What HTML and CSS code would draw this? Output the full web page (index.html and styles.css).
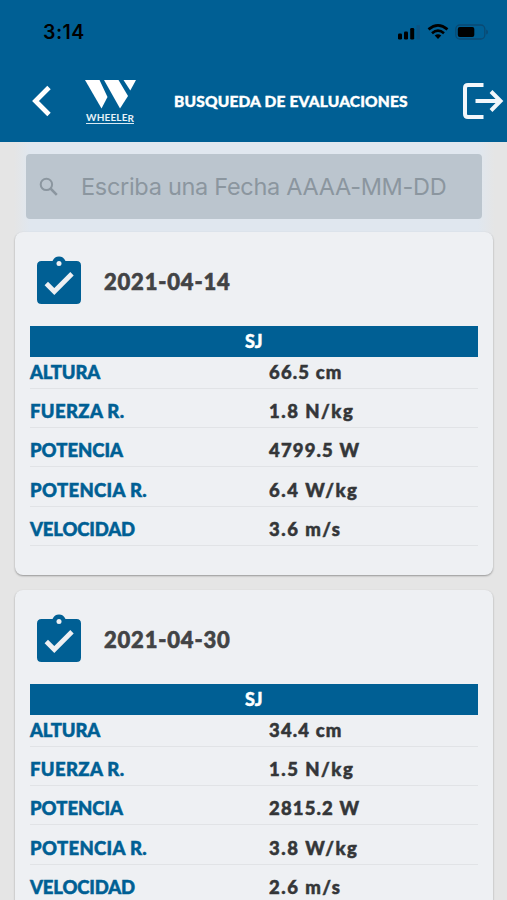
FILE: index.html
```html
<!DOCTYPE html>
<html lang="es">
<head>
<meta charset="utf-8">
<title>Busqueda de evaluaciones</title>
<link rel="stylesheet" href="styles.css">
</head>
<body>
<svg class="symbols" width="0" height="0" aria-hidden="true">
  <symbol id="clipboard" viewBox="0 0 44 48">
    <path fill="#005f94" d="M4.500 5H15.500C17 1.800 19 .4 22 .4S27 1.800 28.500 5H39.500Q44 5 44 9.500V43.500Q44 48 39.500 48H4.500Q0 48 0 43.500V9.500Q0 5 4.500 5Z"/>
    <circle cx="22" cy="7.500" r="2.500" fill="#eef0f3"/>
    <path d="M9.300 27.500L17.300 35.500L35 17.800" fill="none" stroke="#eef0f3" stroke-width="4.800"/>
  </symbol>
</svg>
<header class="header">
  <div class="status">
    <span class="clock">3:14</span>
    <svg class="indicators" width="92" height="18" viewBox="0 0 92 18">
      <rect x="2" y="10.500" width="4" height="6" rx="1.300"/><rect x="8" y="8.500" width="4" height="8" rx="1.300"/><rect x="14.200" y="5" width="4" height="11.500" rx="1.300"/><rect x="20.500" y="2" width="3.500" height="14.500" rx="1" fill="#0b5585"/>
      <g fill="none" stroke="#000" stroke-width="2.700"><path d="M32.500 6.400Q42 -1.500 51.500 6.400"/><path d="M36 10.200Q42 5.200 48 10.200"/></g>
      <path d="M38.700 12.600Q42 9.800 45.300 12.600L42 16Z"/>
      <rect x="59.800" y="2" width="29" height="14" rx="4" fill="none" stroke="#0a4a73" stroke-width="1.300"/>
      <rect x="61.800" y="4" width="16.500" height="10" rx="2"/><path d="M90.200 6.500Q92 7 92 9T90.200 11.500Z" fill="#0a4a73"/>
    </svg>
  </div>
  <div class="toolbar">
    <svg class="back" width="20" height="32" viewBox="0 0 20 32"><path d="M18 2.500L4.500 16L18 29.500" fill="none" stroke="#fff" stroke-width="4.800"/></svg>
    <div class="brand">
      <svg width="52" height="29" viewBox="0 0 52 29" fill="#fff"><path d="M0 0H14.500L22.500 17L16.500 28.500Z"/><path d="M19 0H33.500L43 16L35 28.500Z"/><path d="M38.500 0H51L45.300 10.500Z"/></svg>
      <div class="brand-name">WHEELE<span>R</span></div>
    </div>
    <h1 class="title">BUSQUEDA DE EVALUACIONES</h1>
    <svg class="logout" width="41" height="36" viewBox="0 0 41 36" fill="none" stroke="#f2f7fb" stroke-width="4"><path d="M20.500 2H5Q2 2 2 5V31Q2 34 5 34H20.500"/><path d="M12.500 18H38M28 8.500L37.500 18L28 27.500"/></svg>
  </div>
</header>
<main class="content">
  <div class="search">
    <svg width="20" height="20" viewBox="0 0 20 20" fill="none" stroke="#8b969f" stroke-width="2"><circle cx="7.400" cy="7.400" r="5.700"/><path d="M11.500 11.500L17.800 17.800" stroke-width="2.500"/></svg>
    <span>Escriba una Fecha AAAA-MM-DD</span>
  </div>
  <article class="card">
    <div class="card-head"><svg width="44" height="48"><use href="#clipboard"/></svg><h2>2021-04-14</h2></div>
    <div class="test">SJ</div>
    <dl>
      <div><dt class="tight">ALTURA</dt><dd>66.5 cm</dd></div>
      <div><dt class="loose">FUERZA R.</dt><dd class="wide">1.8 N/kg</dd></div>
      <div><dt>POTENCIA</dt><dd>4799.5 W</dd></div>
      <div><dt class="loose">POTENCIA R.</dt><dd class="wide">6.4 W/kg</dd></div>
      <div><dt class="tight">VELOCIDAD</dt><dd class="wide">3.6 m/s</dd></div>
    </dl>
  </article>
  <article class="card">
    <div class="card-head"><svg width="44" height="48"><use href="#clipboard"/></svg><h2>2021-04-30</h2></div>
    <div class="test">SJ</div>
    <dl>
      <div><dt class="tight">ALTURA</dt><dd>34.4 cm</dd></div>
      <div><dt class="loose">FUERZA R.</dt><dd class="wide">1.5 N/kg</dd></div>
      <div><dt>POTENCIA</dt><dd>2815.2 W</dd></div>
      <div><dt class="loose">POTENCIA R.</dt><dd class="wide">3.8 W/kg</dd></div>
      <div><dt class="tight">VELOCIDAD</dt><dd class="wide">2.6 m/s</dd></div>
    </dl>
  </article>
</main>
</body>
</html>
```
FILE: styles.css
```css
* { box-sizing: border-box; }
body {
  margin: 0;
  width: 507px;
  height: 900px;
  overflow: hidden;
  background: #e5e5e5;
  font-family: Lato, sans-serif;
}
h1, h2, dl, dt, dd { margin: 0; }
svg { display: block; flex: none; }
.symbols { position: absolute; }
.header { height: 142px; background: #005f94; }
.status {
  display: flex;
  justify-content: space-between;
  align-items: center;
  height: 62px;
  padding: 1px 19px 0 43px;
}
.clock { font: 600 19.500px Inter, sans-serif; letter-spacing: .5px; color: #000; }
.toolbar { display: flex; align-items: flex-start; height: 80px; padding-left: 31px; }
.back { margin-top: 23px; }
.brand { width: 52px; margin: 18px 0 0 34px; }
.brand-name {
  width: 48px;
  height: 15px;
  margin: 0 0 0 1px;
  padding-top: 3px;
  border-bottom: 1px solid #d9e9f3;
  color: #e6f1f8;
  font: 700 10px/11px Lato, sans-serif;
  letter-spacing: .15px;
  white-space: nowrap;
}
.brand-name span { position: relative; top: 1px; }
.title {
  width: 250px;
  margin: 29px 0 0 37px;
  color: #fff;
  font-size: 15.500px;
  line-height: 20px;
  font-weight: 900;
  letter-spacing: .18px;
  -webkit-text-stroke: .4px;
  white-space: nowrap;
}
.logout { margin: 21px 0 0 39px; }
.content {
  display: flex;
  flex-direction: column;
  height: 758px;
  overflow: hidden;
  padding: 12px 14.500px 0 15px;
  background: linear-gradient(90deg, transparent 14px, #e0e7ef 30px, #e0e7ef 478px, transparent 495px) 0 0 / 100% 100px no-repeat;
}
.search {
  display: flex;
  flex: none;
  align-items: center;
  height: 65px;
  margin: 0 10.500px 13px 11px;
  padding-left: 13px;
  gap: 22px;
  border-radius: 4px;
  background: #bbc5ce;
  color: #8b969f;
  font: 400 23.500px Inter, sans-serif;
  letter-spacing: -.3px;
  white-space: nowrap;
}
.card {
  height: 343px;
  margin-bottom: 15px;
  padding: 24px 15px 0;
  border-radius: 8px;
  background: #eef0f3;
  box-shadow: 0 1px 2px rgba(0, 0, 0, .35);
  flex: none;
}
.card-head { display: flex; height: 70px; padding-left: 7px; gap: 23px; }
.card-head h2 {
  margin-top: 12px;
  color: #424345;
  font-size: 22px;
  line-height: 28px;
  font-weight: 900;
  letter-spacing: .8px;
  -webkit-text-stroke: .6px;
  white-space: nowrap;
}
.test {
  height: 31.300px;
  background: #005f94;
  color: #fff;
  font-size: 18px;
  line-height: 31px;
  font-weight: 900;
  text-align: center;
  -webkit-text-stroke: .4px;
}
dl > div {
  display: grid;
  grid-template-columns: 239px 1fr;
  align-items: end;
  height: 39.200px;
  padding-bottom: 4px;
  border-bottom: 1px solid #e1e3e6;
  font-size: 18.500px;
  line-height: 23px;
  font-weight: 900;
  -webkit-text-stroke: .5px;
  white-space: nowrap;
}
dl > div:first-child { height: 31.700px; }
dt { color: #005f94; }
dt.tight { letter-spacing: -.15px; }
dt.loose { letter-spacing: .35px; }
dd { color: #343638; letter-spacing: 1.150px; }
dd.wide { letter-spacing: 1.500px; }
```
